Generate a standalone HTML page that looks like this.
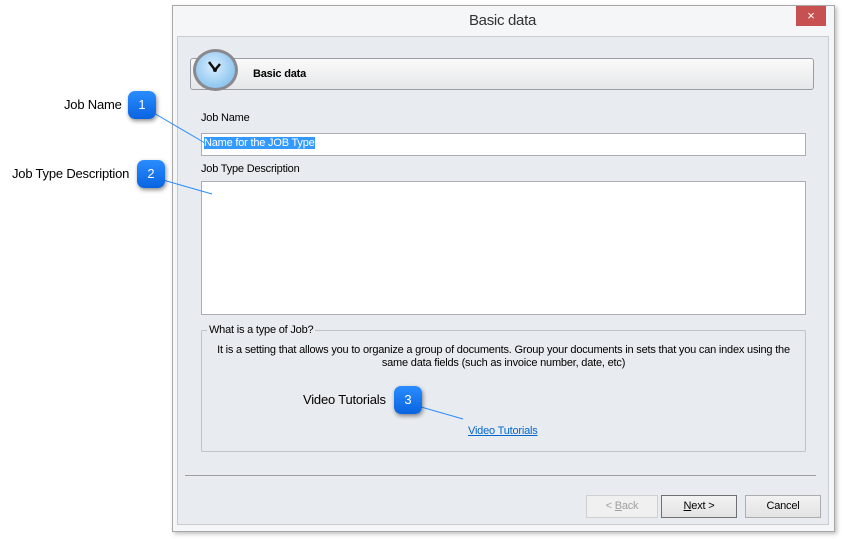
<!DOCTYPE html>
<html><head><style>
body{margin:0;width:842px;height:539px;background:#fff;position:relative;overflow:hidden;font-family:"Liberation Sans",sans-serif;}
.a{position:absolute;}
.s{font-size:11px;letter-spacing:-0.2px;color:#000;}
.badge{position:absolute;width:28px;height:28px;border-radius:7px;background:linear-gradient(#2a8cff,#0a64e0);color:#fff;font-size:13px;text-align:center;line-height:28px;box-shadow:1px 2px 4px rgba(0,0,0,.45);}
.lbl{position:absolute;font-size:13px;letter-spacing:-0.2px;color:#000;}
.btn{position:absolute;height:21px;border:1px solid #adadad;background:linear-gradient(#f2f2f2,#e3e3e3);font-size:11px;text-align:center;line-height:21px;letter-spacing:-0.2px;}
</style></head><body>
<div class="a" style="left:172px;top:5px;width:661px;height:525px;border:1px solid #a8a8a8;background:#f5f6f7;box-shadow:2px 2px 4px rgba(0,0,0,.25);"></div>
<div class="a" style="left:172px;top:12px;width:661px;text-align:center;font-size:15px;color:#333;letter-spacing:-0.3px;">Basic data</div>
<div class="a" style="left:796px;top:6px;width:30px;height:20px;background:#c75050;color:#fff;font-size:13px;text-align:center;line-height:20px;">×</div>
<div class="a" style="left:177px;top:36px;width:650px;height:487px;background:#e8ebef;border:1px solid #c8ccd2;"></div>
<div class="a" style="left:190px;top:58px;width:622px;height:30px;border:1px solid #9a9ea4;border-radius:3px;background:linear-gradient(#fafafa,#e6e7e9);"></div>
<div class="a" style="left:193px;top:49px;width:45px;height:42px;border-radius:50%;background:radial-gradient(circle at 45% 40%,#dbeeff,#8fc7f0 70%);border:3px solid #8a8a8e;box-sizing:border-box;"></div>
<svg class="a" style="left:205px;top:58px" width="24" height="24"><path d="M4 4 L10 12 L15 6" stroke="#111" stroke-width="2.5" fill="none"/><circle cx="10" cy="12" r="2" fill="#111"/></svg>
<div class="a s" style="left:253px;top:68px;font-weight:bold;">Basic data</div>
<div class="a s" style="left:201px;top:112px;">Job Name</div>
<div class="a" style="left:201px;top:133px;width:603px;height:21px;border:1px solid #abadb3;background:#fff;"></div>
<div class="a s" style="left:204px;top:137px;background:#3399ff;color:#fff;">Name for the JOB Type</div>
<div class="a s" style="left:201px;top:163px;">Job Type Description</div>
<div class="a" style="left:201px;top:181px;width:603px;height:132px;border:1px solid #abadb3;background:#fff;"></div>
<div class="a" style="left:201px;top:330px;width:603px;height:120px;border:1px solid #bfc3c8;border-radius:2px;"></div>
<div class="a s" style="left:207px;top:324px;background:#e8ebef;padding:0 2px;">What is a type of Job?</div>
<div class="a s" style="left:202px;top:344px;width:603px;text-align:center;line-height:13px;">It is a setting that allows you to organize a group of documents. Group your documents in sets that you can index using the<br>same data fields (such as invoice number, date, etc)</div>
<div class="a s" style="left:468px;top:425px;color:#0066cc;text-decoration:underline;">Video Tutorials</div>
<div class="a" style="left:185px;top:475px;width:631px;height:1px;background:#a0a0a0;"></div>
<div class="btn" style="left:586px;top:495px;width:70px;color:#a0a0a0;background:#f0f0f0;border-color:#d0d0d0;">&lt; <u>B</u>ack</div>
<div class="btn" style="left:661px;top:495px;width:74px;border-color:#707070;"><u>N</u>ext &gt;</div>
<div class="btn" style="left:745px;top:495px;width:74px;">Cancel</div>
<svg class="a" style="left:0;top:0" width="842" height="539"><g stroke="#2a8cff" stroke-width="1"><line x1="152" y1="112" x2="205" y2="143"/><line x1="163" y1="180" x2="212" y2="194"/><line x1="414" y1="405" x2="463" y2="419"/></g></svg>
<div class="lbl" style="left:64px;top:97px;">Job Name</div>
<div class="badge" style="left:128px;top:91px;">1</div>
<div class="lbl" style="left:12px;top:166px;">Job Type Description</div>
<div class="badge" style="left:137px;top:160px;">2</div>
<div class="lbl" style="left:303px;top:392px;">Video Tutorials</div>
<div class="badge" style="left:394px;top:386px;">3</div>
</body></html>
